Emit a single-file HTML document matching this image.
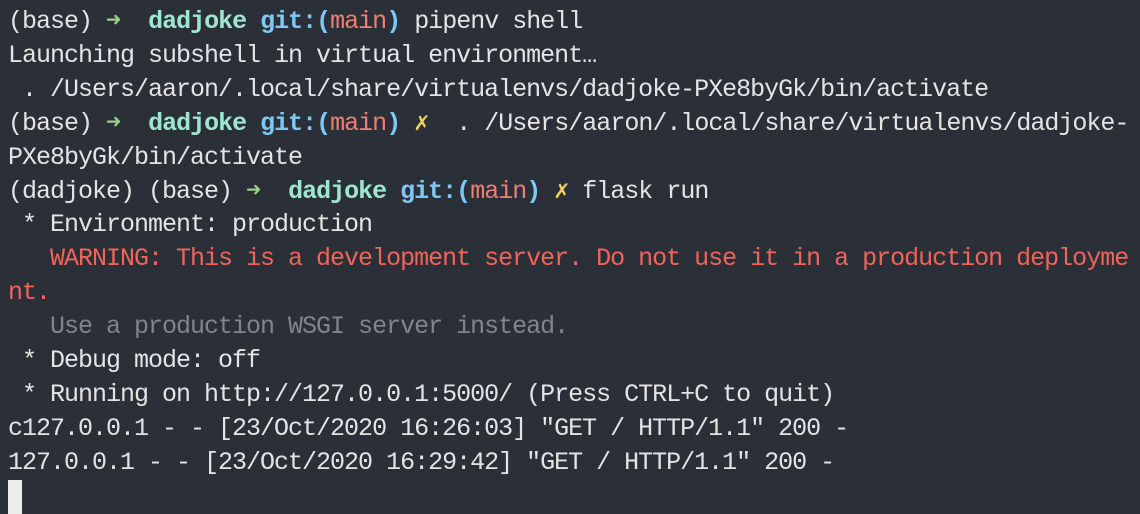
<!DOCTYPE html>
<html><head><meta charset="utf-8"><style>
html,body{margin:0;padding:0;background:#2b3038;width:1140px;height:514px;overflow:hidden}
pre{margin:0;position:absolute;left:8px;top:5px;font-family:"Liberation Mono","DejaVu Sans Mono",monospace;font-size:25px;letter-spacing:-1px;line-height:33.9px;color:#e4e4e4;white-space:pre}
.g{color:#98d08a;font-weight:bold}.t{color:#9fe6cf;font-weight:bold}.b{color:#7fc7f5;font-weight:bold}.m{color:#f07f73;font-weight:normal}.y{color:#f0d060;font-weight:bold}.r{color:#f0645a}.d{color:#80858b}
.cur{position:absolute;left:8px;top:480px;width:14px;height:34px;background:#ececec}
</style></head><body>
<pre>(base) <span class="g">➜</span>  <span class="t">dadjoke</span> <span class="b">git:(<span class="m">main</span>)</span> pipenv shell
Launching subshell in virtual environment…
 . /Users/aaron/.local/share/virtualenvs/dadjoke-PXe8byGk/bin/activate
(base) <span class="g">➜</span>  <span class="t">dadjoke</span> <span class="b">git:(<span class="m">main</span>)</span> <span class="y">✗</span>  . /Users/aaron/.local/share/virtualenvs/dadjoke-
PXe8byGk/bin/activate
(dadjoke) (base) <span class="g">➜</span>  <span class="t">dadjoke</span> <span class="b">git:(<span class="m">main</span>)</span> <span class="y">✗</span> flask run
 * Environment: production
<span class="r">   WARNING: This is a development server. Do not use it in a production deployme
nt.</span>
<span class="d">   Use a production WSGI server instead.</span>
 * Debug mode: off
 * Running on http://127.0.0.1:5000/ (Press CTRL+C to quit)
c127.0.0.1 - - [23/Oct/2020 16:26:03] "GET / HTTP/1.1" 200 -
127.0.0.1 - - [23/Oct/2020 16:29:42] "GET / HTTP/1.1" 200 -
</pre>
<div class="cur"></div>
</body></html>
